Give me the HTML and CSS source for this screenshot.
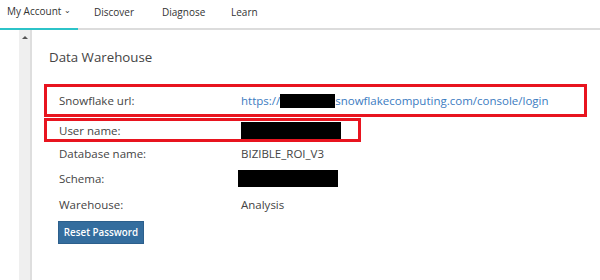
FILE: index.html
```html
<!DOCTYPE html>
<html lang="en">
<head>
    <meta charset="UTF-8">
    <meta name="viewport" content="width=device-width, initial-scale=1.0">
    <title>Data Warehouse</title>
    <link rel="stylesheet" href="styles.css">
</head>
<body>
    <nav class="topnav">
        <a class="nav-item active">My Account <span class="caret">&#8964;</span></a>
        <a class="nav-item discover">Discover</a>
        <a class="nav-item diagnose">Diagnose</a>
        <a class="nav-item">Learn</a>
    </nav>

    <div class="main">
        <div class="gutter"></div>
        <div class="scroller">
            <span class="arrow"></span>
        </div>

        <div class="content">
            <h1>Data Warehouse</h1>

            <div class="row boxed wide">
                <span class="label">Snowflake url:</span>
                <span class="value link">https://<span class="redact url-redact"></span>snowflakecomputing.com/console/login</span>
            </div>
            <div class="row boxed short">
                <span class="label">User name:</span>
                <span class="value"><span class="redact user-redact"></span></span>
            </div>
            <div class="row db-row">
                <span class="label">Database name:</span>
                <span class="value">BIZIBLE_ROI_V3</span>
            </div>
            <div class="row">
                <span class="label">Schema:</span>
                <span class="value"><span class="redact schema-redact"></span></span>
            </div>
            <div class="row">
                <span class="label">Warehouse:</span>
                <span class="value">Analysis</span>
            </div>

            <button class="btn">Reset Password</button>
        </div>
    </div>
</body>
</html>
```

FILE: styles.css
```css
body {
    margin: 0;
    font-family: 'Open Sans', sans-serif;
    color: #444;
    background-color: #fff;
}

.topnav {
    display: flex;
    height: 28px;
    border-bottom: 2px solid #dcdcdc;
    font-size: 10px;
}

.nav-item {
    display: flex;
    align-items: center;
    white-space: nowrap;
    color: #333;
    box-sizing: border-box;
    height: 30px;
    margin-bottom: -2px;
    padding-bottom: 6px;
}

.nav-item.active {
    width: 78px;
    padding-left: 7px;
    margin-right: 16px;
    border-bottom: 2px solid #2cc3c8;
}

.discover {
    width: 68px;
}

.diagnose {
    width: 69px;
}

.caret {
    font-size: 8px;
    margin-left: 3px;
    position: relative;
    top: -2px;
}

.main {
    display: flex;
    height: 250px;
}

.gutter {
    width: 19px;
}

.scroller {
    width: 11px;
    background-color: #efefef;
    border-right: 2px solid #dedede;
    display: flex;
    justify-content: center;
    padding-top: 6px;
}

.arrow {
    width: 0;
    height: 0;
    border-left: 3px solid transparent;
    border-right: 3px solid transparent;
    border-bottom: 3px solid #555;
}

.content {
    padding-left: 12px;
    flex: 1;
}

h1 {
    font-size: 13.3px;
    font-weight: normal;
    color: #444;
    margin: 15px 0 0 5px;
    height: 24px;
    line-height: 24px;
}

.row {
    display: flex;
    align-items: center;
    font-size: 11.5px;
    height: 26px;
    padding-left: 15px;
    box-sizing: border-box;
}

.row.boxed {
    border: 3px solid #e8141f;
    padding-left: 12px;
}

.row.wide {
    margin-top: 15px;
    height: 33px;
    width: 543px;
}

.row.short {
    margin-top: 1px;
    height: 24px;
    width: 317px;
}

.row.db-row {
    height: 23px;
}

.label {
    width: 182px;
    flex-shrink: 0;
}

.value {
    display: flex;
    align-items: center;
}

.link {
    color: #3b7bbf;
}

.redact {
    display: inline-block;
    background-color: #000;
}

.url-redact {
    width: 55px;
    height: 14px;
}

.user-redact {
    width: 100px;
    height: 17px;
}

.schema-redact {
    width: 100px;
    height: 17px;
    margin-left: -3px;
}

.btn {
    margin: 4px 0 0 14px;
    width: 86px;
    height: 23px;
    padding: 0;
    background-color: #346d9e;
    color: #fff;
    border: 1px solid #2c5f8c;
    font-family: 'Open Sans', sans-serif;
    font-size: 9.8px;
    font-weight: 600;
}
```
